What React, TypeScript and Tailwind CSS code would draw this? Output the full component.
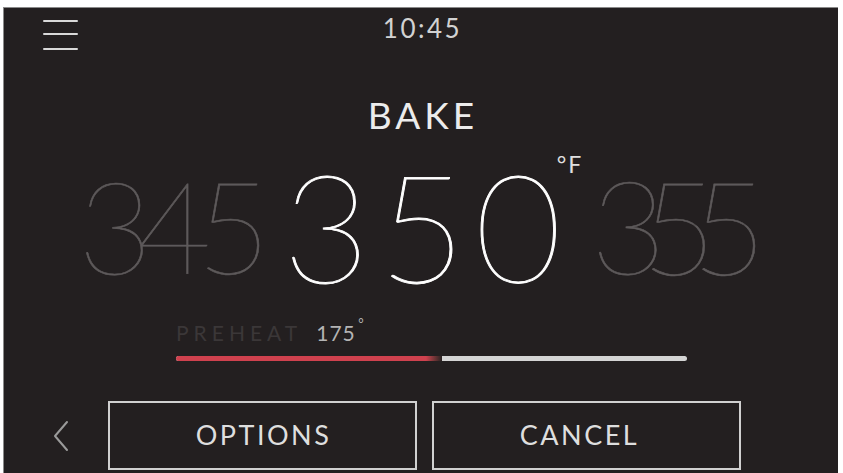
import * as React from "react";

const font = { fontFamily: "Lato, 'Open Sans', sans-serif" };

function MenuIcon() {
    return (
        <div className="flex flex-col w-[35px] pt-[11px]">
            <span className="block h-[2px] bg-[#d9d9d9] rounded-full"/>
            <span className="block h-[2px] bg-[#d9d9d9] rounded-full mt-[11px]"/>
            <span className="block h-[2px] bg-[#d9d9d9] rounded-full mt-[13px]"/>
        </div>
    )
}

function Chevron() {
    return (
        <svg width="18" height="32" viewBox="0 0 18 32" fill="none" stroke="#9a9a9a" strokeWidth="2"
             strokeLinecap="round" strokeLinejoin="round">
            <path d="M15 2 L3 16 L15 30"/>
        </svg>
    )
}

export default function App() {
    const progress = 49

    return (
        <div className="w-[843px] h-[473px] bg-white overflow-hidden" style={font}>
            <div className="ml-[3px] mt-[7px] w-[835px] h-[466px] bg-[#231f20] flex flex-col border-l border-t border-[#8a8a8a]">
                {/* top bar: menu + clock */}
                <div className="relative h-[50px] flex justify-center">
                    <div className="absolute left-[39px] top-[1px]">
                        <MenuIcon/>
                    </div>
                    <p className="mt-[7px] pl-[3px] text-[26px] text-[#d2d2d2] tracking-[2.5px] leading-none">10:45</p>
                </div>

                <p className="mt-[38px] pl-[4px] text-center text-[37px] text-[#ececec] tracking-[4px] leading-none">BAKE</p>

                {/* temperature picker */}
                <div className="mt-[22px] h-[140px] flex items-center pl-[74px]">
                    <span className="text-[128px] font-thin text-[#5e5a5b] tracking-[-15px] leading-none [-webkit-text-stroke:0.6px_#5e5a5b]">345</span>
                    <div className="relative ml-[27px]">
                        <span className="text-[150px] font-thin text-white tracking-[9px] leading-none [-webkit-text-stroke:0.9px_#ffffff]">350</span>
                        <span className="absolute left-full -ml-[14px] top-[3px] text-[23px] text-[#e0e0e0] tracking-[2px] leading-none">°F</span>
                    </div>
                    <span className="ml-[20px] text-[130px] font-thin text-[#5e5a5b] tracking-[-25px] leading-none [-webkit-text-stroke:0.6px_#5e5a5b]">355</span>
                </div>

                {/* preheat progress */}
                <div className="ml-[172px] mt-[27px] w-[511px]">
                    <div className="flex items-start gap-[14px] leading-none">
                        <span className="text-[21px] text-[#3b3738] tracking-[5px]">PREHEAT</span>
                        <span className="relative text-[21px] text-[#b4b4b4] tracking-[1px]">
                            175
                            <span className="absolute -right-[9px] -top-[5px] text-[13px]">°</span>
                        </span>
                    </div>
                    <div className="mt-[13px] h-[5px] rounded-full bg-[#d4d4d4] overflow-hidden flex">
                        <div className="h-full bg-[#cf414e]" style={{width: `${progress}%`}}/>
                        <div className="h-full w-[16px] bg-gradient-to-r from-[#cf414e] to-[#262222]"/>
                    </div>
                </div>

                {/* bottom buttons */}
                <div className="mt-auto flex items-center pl-[48px] pb-[3px]">
                    <Chevron/>
                    <button className="ml-[38px] w-[309px] h-[69px] border-2 border-[#d0d0d0] pl-[2px] text-[27px] text-[#dedede] tracking-[2.5px]">
                        OPTIONS
                    </button>
                    <button className="ml-[15px] w-[309px] h-[69px] border-2 border-[#d0d0d0] pr-[14px] text-[27px] text-[#dedede] tracking-[2.5px]">
                        CANCEL
                    </button>
                </div>
            </div>
        </div>
    )
}
